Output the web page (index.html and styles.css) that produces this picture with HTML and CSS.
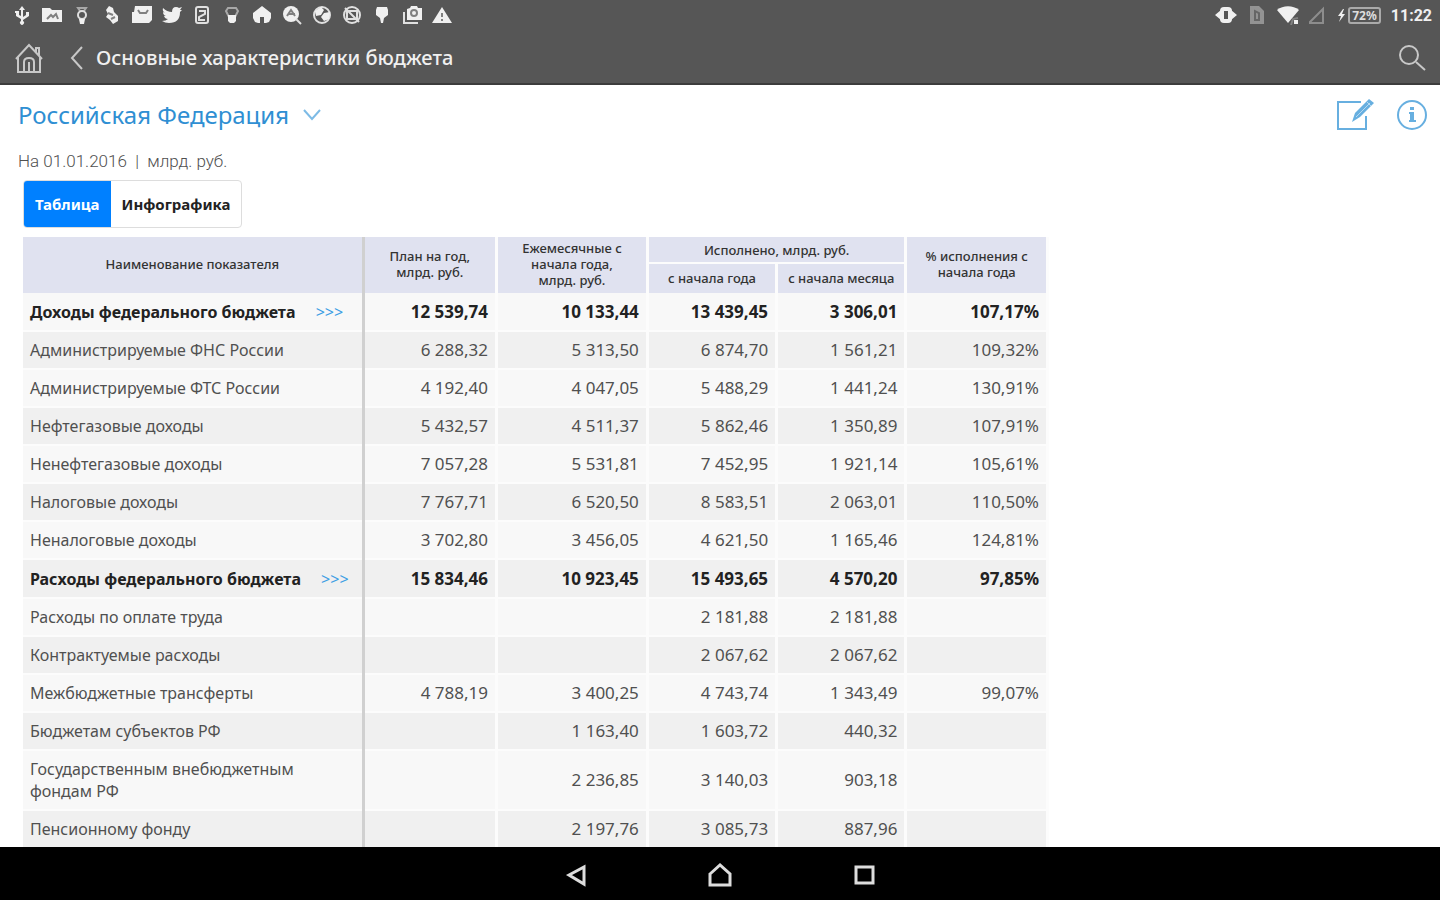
FILE: index.html
```html
<!DOCTYPE html>
<html lang="ru">
<head>
  <meta charset="UTF-8" />
  <meta name="viewport" content="width=device-width, initial-scale=1.0"/>
  <title>Основные характеристики бюджета</title>
  <link rel="stylesheet" href="styles.css">
</head>
<body>
  <header class="top">
    <div class="status">
      <div class="status-left">
        <svg viewBox="0 0 20 20"><path d="M10 1l3 4h-2v7l3-2V7h3v4l-6 4v1a2 2 0 1 1-2 0v-2l-5-3V8H3V6h4v4l2 1V5H7z"/></svg>
        <svg viewBox="0 0 20 20"><path d="M0 3h8l2 2h10v12H0z"/><path class="cut" d="M5 14l4-4 2 2 3-3 2 5"/></svg>
        <svg viewBox="0 0 20 20"><path class="line soft" d="M8 6L6 3h8l-2 3"/><circle class="line" cx="10" cy="10" r="4"/><path d="M7 14h6l-1 5H8z"/></svg>
        <svg viewBox="0 0 20 20"><path d="M7 1l4 2 1 4 4 4v5l-5 3-3-4-4-3 2-3-2-4z"/><path class="cut" d="M6 8l5 2M9 14l4-2"/></svg>
        <svg viewBox="0 0 20 20"><path d="M3 1h17v14l-3 3H0V7h2z"/><path class="cut" d="M6 5l2 3h6l2-3"/></svg>
        <svg viewBox="0 0 20 20"><path d="M1 3Q5 7 10 7 10 2 14 2q2 0 3 1l3-1-2 3 2 0-2 2q0 11-11 11-4 0-7-2 4 0 6-2-3 0-4-3h2Q1 10 1 7l2 1Q0 6 1 3z"/></svg>
        <svg viewBox="0 0 20 20"><rect class="line" x="4" y="2" width="12" height="16" rx="2"/><path class="line" d="M7 6h6v3l-6 3v3h6"/></svg>
        <svg viewBox="0 0 20 20"><path class="line soft" d="M7 12L4 6l2-3h8l2 3-3 6"/><path d="M6 10h8v6l-2 2H8l-2-2z"/></svg>
        <svg viewBox="0 0 20 20"><path d="M10 1l9 7v5l-2 4-3 1h-2v-6H8v6H6l-3-1-2-4V8z"/></svg>
        <svg viewBox="0 0 20 20"><circle cx="9" cy="9" r="8"/><path class="line" d="M14 14l5 5"/><path class="cut" d="M5 11l4-6 4 6M6 9h7"/></svg>
        <svg viewBox="0 0 20 20"><circle class="line" cx="10" cy="10" r="8"/><path d="M3 6l6-4 3 3-3 5-5 1zM12 8l6-1-1 7-5 2-3-4z"/></svg>
        <svg viewBox="0 0 20 20"><circle class="line" cx="10" cy="10" r="8"/><path class="line" d="M5 6h10v8H5zM3 3l14 14"/></svg>
        <svg viewBox="0 0 20 20"><path d="M5 2h10l1 3v5l-4 3-1 5H9l-1-5-4-3V5z"/></svg>
        <svg viewBox="0 0 20 20"><path d="M5 4l3-1 1-2h6l1 2h4v12H5z"/><path class="line" d="M2 7v11h14"/><circle class="cut" cx="12" cy="8" r="3"/></svg>
        <svg viewBox="0 0 20 20"><path d="M10 2l10 16H0z"/><path class="cut" d="M10 8v4M10 14v2"/></svg>
      </div>
      <div class="status-right">
        <svg class="i22" viewBox="0 0 22 20"><path d="M6 5v10l-6-5zM16 5v10l6-5z"/><rect class="thick" x="7" y="4" width="8" height="12" rx="2"/></svg>
        <svg class="dim" viewBox="0 0 20 20"><path d="M3 1h9l5 5v13H3z"/><path class="cut" d="M8 6v9h4V8z"/></svg>
        <svg class="i22" viewBox="0 0 22 20"><path d="M0 5c6-5 16-5 22 0L11 18z"/><path class="cut" d="M14 20l2-6 5-1"/><path d="M17 15h4v4h-4z"/></svg>
        <svg class="dim" viewBox="0 0 20 20"><path class="line" d="M14 4v14H0z"/></svg>
        <svg class="bolt" viewBox="0 0 10 20"><path d="M7 4L2 11h3l-2 6 6-8H6l2-5z"/></svg>
        <span class="battery">72%</span>
        <span class="clock">11:22</span>
      </div>
    </div>
    <div class="bar">
      <button class="home" aria-label="Домой"><svg viewBox="0 0 30 32"><path d="M2 17L15 3l13 14M22 10V6h3v7M4 15v15h22V15M10 30V20q0-4 5-4t5 4v10M15 20v10"/></svg></button>
      <button class="back" aria-label="Назад"><svg viewBox="0 0 14 24"><path d="M12 1L2 12l10 11"/></svg></button>
      <h1>Основные характеристики бюджета</h1>
      <button class="search" aria-label="Поиск"><svg viewBox="0 0 28 28"><circle cx="11" cy="11" r="9"/><path d="M18 18l9 8"/></svg></button>
    </div>
  </header>

  <main>
    <div class="region">
      <button class="region-name">Российская Федерация <svg viewBox="0 0 18 12"><path d="M1 1l8 9 8-9"/></svg></button>
      <div class="tools">
        <button aria-label="Изменить"><svg class="edit" viewBox="0 0 38 32"><path d="M25 3H2v27h28V17"/><path class="fill" d="M16 23l3-9L33 0l5 4-14 14z"/><path class="pen" d="M20 18l14-14M31 3l4 4"/></svg></button>
        <button aria-label="Информация"><svg class="info" viewBox="0 0 32 32"><circle cx="16" cy="16" r="14"/><path d="M13 14h4v8M13 22h7"/><path class="dot" d="M16 8v3M16 14v8"/></svg></button>
      </div>
    </div>
    <p class="date">На 01.01.2016 &nbsp;|&nbsp; млрд. руб.</p>
    <div class="tabs">
      <button class="active">Таблица</button>
      <button>Инфографика</button>
    </div>

    <table>
      <colgroup>
        <col class="c-name"><col class="c-plan"><col class="c-month"><col class="c-done"><col class="c-done"><col class="c-pct">
      </colgroup>
      <thead>
        <tr>
          <th rowspan="2">Наименование показателя</th>
          <th rowspan="2">План на год,<br>млрд. руб.</th>
          <th rowspan="2">Ежемесячные с<br>начала года,<br>млрд. руб.</th>
          <th colspan="2">Исполнено, млрд. руб.</th>
          <th rowspan="2">% исполнения с<br>начала года</th>
        </tr>
        <tr class="sub">
          <th>с начала года</th>
          <th>с начала месяца</th>
        </tr>
      </thead>
      <tbody>
        <tr class="total"><td>Доходы федерального бюджета <a href="#">&gt;&gt;&gt;</a></td><td>12 539,74</td><td>10 133,44</td><td>13 439,45</td><td>3 306,01</td><td>107,17%</td></tr>
        <tr><td>Администрируемые ФНС России</td><td>6 288,32</td><td>5 313,50</td><td>6 874,70</td><td>1 561,21</td><td>109,32%</td></tr>
        <tr><td>Администрируемые ФТС России</td><td>4 192,40</td><td>4 047,05</td><td>5 488,29</td><td>1 441,24</td><td>130,91%</td></tr>
        <tr><td>Нефтегазовые доходы</td><td>5 432,57</td><td>4 511,37</td><td>5 862,46</td><td>1 350,89</td><td>107,91%</td></tr>
        <tr><td>Ненефтегазовые доходы</td><td>7 057,28</td><td>5 531,81</td><td>7 452,95</td><td>1 921,14</td><td>105,61%</td></tr>
        <tr><td>Налоговые доходы</td><td>7 767,71</td><td>6 520,50</td><td>8 583,51</td><td>2 063,01</td><td>110,50%</td></tr>
        <tr><td>Неналоговые доходы</td><td>3 702,80</td><td>3 456,05</td><td>4 621,50</td><td>1 165,46</td><td>124,81%</td></tr>
        <tr class="total"><td>Расходы федерального бюджета <a href="#">&gt;&gt;&gt;</a></td><td>15 834,46</td><td>10 923,45</td><td>15 493,65</td><td>4 570,20</td><td>97,85%</td></tr>
        <tr><td>Расходы по оплате труда</td><td></td><td></td><td>2 181,88</td><td>2 181,88</td><td></td></tr>
        <tr><td>Контрактуемые расходы</td><td></td><td></td><td>2 067,62</td><td>2 067,62</td><td></td></tr>
        <tr><td>Межбюджетные трансферты</td><td>4 788,19</td><td>3 400,25</td><td>4 743,74</td><td>1 343,49</td><td>99,07%</td></tr>
        <tr><td>Бюджетам субъектов РФ</td><td></td><td>1 163,40</td><td>1 603,72</td><td>440,32</td><td></td></tr>
        <tr><td>Государственным внебюджетным<br>фондам РФ</td><td></td><td>2 236,85</td><td>3 140,03</td><td>903,18</td><td></td></tr>
        <tr><td>Пенсионному фонду</td><td></td><td>2 197,76</td><td>3 085,73</td><td>887,96</td><td></td></tr>
      </tbody>
    </table>
  </main>

  <nav class="system">
    <button aria-label="Назад"><svg viewBox="0 0 24 24"><path d="M20 4v17L5 12z"/></svg></button>
    <button aria-label="Главный экран"><svg viewBox="0 0 24 24"><path d="M2 11L12 2l10 9v11H2z"/></svg></button>
    <button aria-label="Недавние"><svg viewBox="0 0 24 24"><path d="M4 4h17v16H4z"/></svg></button>
  </nav>
</body>
</html>
```
FILE: styles.css
```css
* {
  box-sizing: border-box;
}
body {
  margin: 0;
  height: 100vh;
  display: flex;
  flex-direction: column;
  font-family: "Noto Sans", "Open Sans", sans-serif;
  background: #fff;
  color: #505050;
}
button {
  margin: 0;
  padding: 0;
  border: none;
  background: none;
  font-family: inherit;
  color: inherit;
  cursor: pointer;
}
svg {
  display: block;
  fill: none;
}

/* top bars */
.top {
  background: #565656;
  border-bottom: 2px solid #3c3c3c;
}
.status {
  display: flex;
  justify-content: space-between;
  height: 30px;
  padding: 0 8px 0 12px;
}
.status-left, .status-right {
  display: flex;
  align-items: center;
  gap: 10px;
}
.status svg {
  width: 20px;
  height: 20px;
  fill: #f0f0f0;
}
.status .i22 {
  width: 22px;
}
.status .bolt {
  width: 10px;
  margin: 0 -8px 0 -3px;
}
.status .line {
  fill: none;
  stroke: #e0e0e0;
  stroke-width: 2;
}
.status .soft {
  stroke: #a8a8a8;
}
.status .thick {
  fill: none;
  stroke: #f0f0f0;
  stroke-width: 4;
}
.status .cut {
  fill: none;
  stroke: #808080;
  stroke-width: 2;
}
.status .dim {
  opacity: 0.4;
}
.battery {
  padding: 0 2px;
  border: 2px solid #aaa;
  border-radius: 3px;
  font-size: 12px;
  font-weight: bold;
  line-height: 13px;
  color: #ddd;
}
.clock {
  font-family: Roboto, sans-serif;
  font-size: 16px;
  font-weight: bold;
  color: #f0f0f0;
}
.bar {
  display: flex;
  align-items: center;
  height: 53px;
  padding: 2px 14px 0;
}
.bar svg {
  stroke: #c8c8c8;
  stroke-width: 2;
}
.home svg {
  width: 30px;
  height: 32px;
}
.back {
  margin: 0 12px 0 26px;
}
.back svg {
  width: 14px;
  height: 24px;
}
.search {
  margin-left: auto;
}
.search svg {
  width: 28px;
  height: 28px;
}
h1 {
  margin: 0;
  font-size: 20px;
  font-weight: 500;
  color: #f0f0f0;
}

/* content */
main {
  flex: 1;
  min-height: 0;
  overflow: hidden;
}
.region {
  display: flex;
  align-items: center;
  justify-content: space-between;
  height: 59px;
  padding: 0 12px 0 18px;
}
.region-name {
  display: flex;
  align-items: center;
  gap: 14px;
  font-size: 24px;
  font-weight: 400;
  color: #2f8fd3;
}
.region-name svg {
  width: 18px;
  height: 12px;
  stroke: #7dbbe6;
  stroke-width: 2;
}
.tools {
  display: flex;
  gap: 22px;
}
.tools svg {
  height: 32px;
  stroke: #67afe0;
  stroke-width: 2;
}
.edit {
  width: 38px;
}
.info {
  width: 32px;
}
.tools .fill {
  fill: #67afe0;
  stroke: none;
}
.tools .pen {
  stroke: #b5d9f1;
  stroke-width: 1;
}
.tools .dot {
  stroke-width: 4;
}
.date {
  margin: 0 18px;
  font-family: Roboto, sans-serif;
  font-size: 17px;
  font-weight: 300;
  line-height: 34px;
}
.tabs {
  display: flex;
  width: fit-content;
  height: 48px;
  margin: 2px 23px 9px;
  border: 1px solid #ddd;
  border-radius: 4px;
  overflow: hidden;
}
.tabs button {
  padding: 0 11px;
  font-size: 15px;
  font-weight: bold;
  color: #222;
}
.tabs .active {
  background: #0080ff;
  color: #fff;
}

/* table */
table {
  table-layout: fixed;
  width: calc(100% - 46px);
  max-width: 1026px;
  margin-left: 23px;
  border-spacing: 0;
}
.c-name { width: 33.3%; }
.c-plan { width: 13%; }
.c-month { width: 14.7%; }
.c-done { width: 12.6%; }
th, td {
  border-right: 3px solid #fcfcfc;
  box-shadow: inset 0 -2px #fcfcfc;
}
th {
  height: 27px;
  padding: 0 0 2px;
  background: #e0e2f0;
  font-size: 13px;
  font-weight: 500;
  line-height: 16px;
  color: #333;
}
.sub th {
  height: 29px;
}
th[rowspan], .sub th {
  box-shadow: none;
}
td {
  height: 38px;
  padding: 7px 7px 9px;
  background: #f8f8f8;
  font-size: 17px;
  line-height: 22px;
  text-align: right;
}
tr:nth-child(even) td {
  background: #f0f0f0;
}
th:first-child[rowspan], td:first-child {
  border-right-color: #d0d0d0;
}
td:first-child {
  font-size: 16px;
  text-align: left;
}
.total td {
  height: 39px;
  font-weight: bold;
  color: #222;
}
.total a {
  margin-left: 16px;
  font-weight: normal;
  color: #3f9fe4;
  text-decoration: none;
}

/* system buttons */
.system {
  display: flex;
  justify-content: center;
  align-items: center;
  gap: 120px;
  height: 53px;
  padding-top: 3px;
  background: #000;
}
.system svg {
  width: 24px;
  height: 24px;
  stroke: #ddd;
  stroke-width: 3;
}
```
